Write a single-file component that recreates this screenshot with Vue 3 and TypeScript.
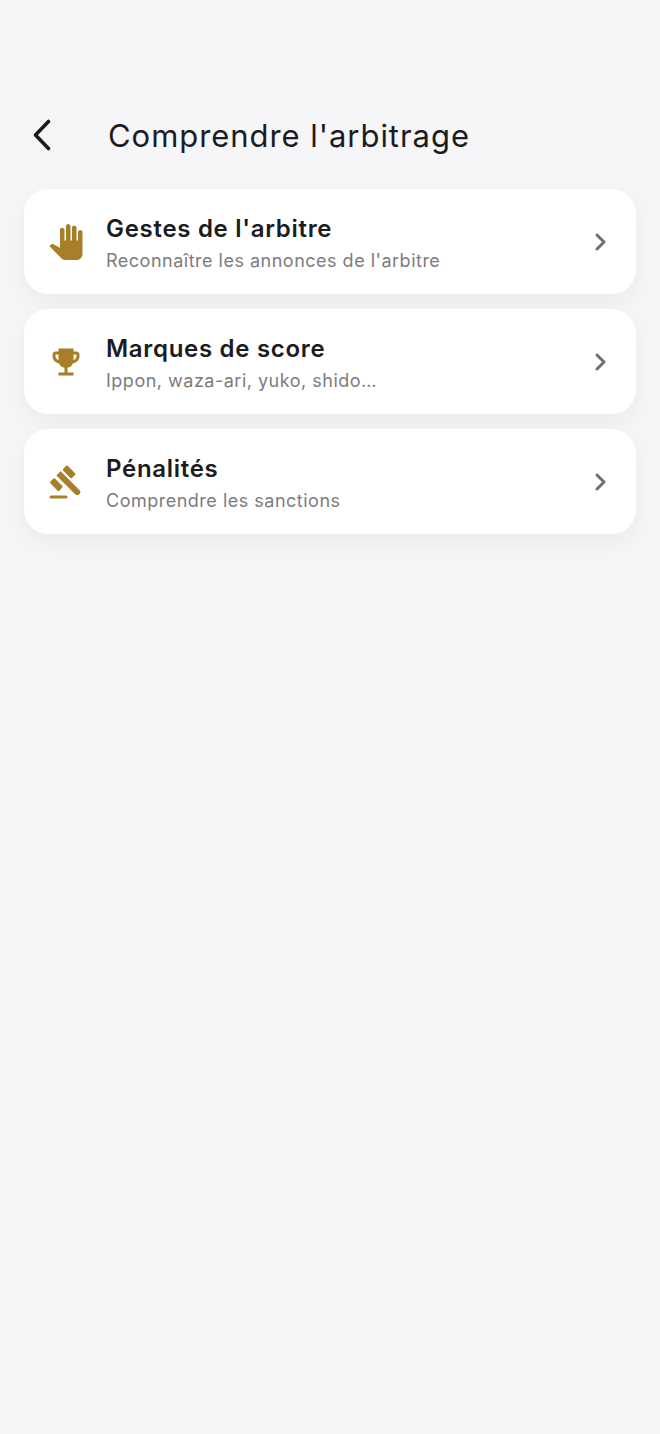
<script setup lang="ts">
interface MenuItem {
  title: string
  subtitle: string
  icon: 'hand' | 'trophy' | 'gavel'
}

const items: MenuItem[] = [
  { title: "Gestes de l'arbitre", subtitle: "Reconnaître les annonces de l'arbitre", icon: 'hand' },
  { title: 'Marques de score', subtitle: 'Ippon, waza-ari, yuko, shido…', icon: 'trophy' },
  { title: 'Pénalités', subtitle: 'Comprendre les sanctions', icon: 'gavel' },
]

const iconPaths: Record<MenuItem['icon'], string> = {
  hand: 'M23 5.5V20c0 2.2-1.8 4-4 4h-7.3c-1.08 0-2.1-.43-2.85-1.19L1 14.83s1.26-1.23 1.3-1.25c.22-.19.49-.29.79-.29.22 0 .42.06.6.16.04.01 4.31 2.46 4.31 2.46V4c0-.83.67-1.5 1.5-1.5S11 3.17 11 4v7h1V1.5c0-.83.67-1.5 1.5-1.5S15 .67 15 1.5V11h1V2.5c0-.83.67-1.5 1.5-1.5s1.5.67 1.5 1.5V11h1V5.5c0-.83.67-1.5 1.5-1.5s1.5.67 1.5 1.5z',
  trophy: 'M19 5h-2V3H7v2H5c-1.1 0-2 .9-2 2v1c0 2.55 1.92 4.63 4.39 4.94.63 1.5 1.98 2.63 3.61 2.96V19H7v2h10v-2h-4v-3.1c1.63-.33 2.98-1.46 3.61-2.96C19.08 12.63 21 10.55 21 8V7c0-1.1-.9-2-2-2zM5 8V7h2v3.82C5.84 10.4 5 9.3 5 8zm14 0c0 1.3-.84 2.4-2 2.82V7h2v1z',
  gavel: 'M2 21h10a1 1 0 0 1 0 2H2a1 1 0 0 1 0-2zM5.6 7.7l2.83-2.83 12.5 12.5a2 2 0 0 1-2.83 2.83zM11.9 1.4a1 1 0 0 1 1.41 0l4.6 4.6a1 1 0 0 1 0 1.41l-1.7 1.7a1 1 0 0 1-1.41 0l-4.6-4.6a1 1 0 0 1 0-1.41zM3.4 9.9a1 1 0 0 1 1.41 0l4.6 4.6a1 1 0 0 1 0 1.41l-1.7 1.7a1 1 0 0 1-1.41 0l-4.6-4.6a1 1 0 0 1 0-1.41z',
}
</script>

<template>
  <main class="page">
    <header class="header">
      <button class="back" type="button" aria-label="Retour">
        <svg width="20" height="32" viewBox="0 0 20 32" fill="none">
          <path d="M16.5 2.5 3.5 16l13 13.5" stroke="#1c1c1e" stroke-width="3.6" stroke-linecap="round" stroke-linejoin="round" />
        </svg>
      </button>
      <h1>Comprendre l'arbitrage</h1>
    </header>

    <section class="list">
      <article v-for="item in items" :key="item.title" class="card">
        <svg class="icon" width="36" height="36" viewBox="0 0 24 24">
          <path :d="iconPaths[item.icon]" fill="#a67f28" />
        </svg>
        <div class="text">
          <strong>{{ item.title }}</strong>
          <span>{{ item.subtitle }}</span>
        </div>
        <svg class="chevron" width="14" height="20" viewBox="0 0 14 20" fill="none">
          <path d="M3 3l7 7-7 7" stroke="#6e6e73" stroke-width="3" stroke-linecap="round" stroke-linejoin="round" />
        </svg>
      </article>
    </section>
  </main>
</template>

<style scoped>
.page {
  min-height: 1434px;
  box-sizing: border-box;
  padding: 110px 24px 0;
  background: #f6f6f9;
  font-family: Inter, "Liberation Sans", sans-serif;
  color: #1c1c1e;
}

.header {
  display: flex;
  align-items: center;
  height: 50px;
  margin-bottom: 29px;
}

.back {
  display: flex;
  padding: 0;
  margin-left: 8px;
  border: 0;
  background: none;
}

h1 {
  margin: 0 0 0 56px;
  font-size: 31px;
  font-weight: 400;
  letter-spacing: 0.95px;
  white-space: nowrap;
}

.list {
  display: grid;
  gap: 15px;
}

.card {
  display: flex;
  align-items: center;
  height: 105px;
  box-sizing: border-box;
  padding: 0 28px 0 24px;
  border-radius: 24px;
  background: #ffffff;
  box-shadow: 0 8px 24px rgba(0, 0, 0, 0.05);
}

.icon {
  flex: none;
}

.text {
  flex: 1;
  display: flex;
  flex-direction: column;
  gap: 4px;
  margin: 3px 0 0 22px;
}

.text strong {
  font-size: 24px;
  line-height: 32px;
  font-weight: 600;
  letter-spacing: 0.7px;
}

.text span {
  font-size: 18px;
  line-height: 24px;
  color: #7c7c80;
  letter-spacing: 0.5px;
}

.chevron {
  flex: none;
}
</style>
